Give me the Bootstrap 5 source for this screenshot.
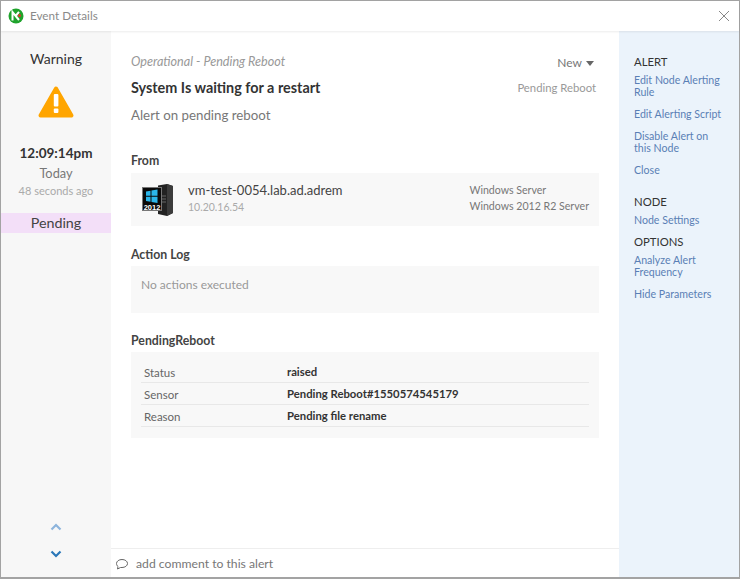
<!DOCTYPE html>
<html lang="en">
<head>
  <meta charset="UTF-8">
  <title>Event Details</title>
  <link href="https://cdn.jsdelivr.net/npm/bootstrap@5.3.0/dist/css/bootstrap.min.css" rel="stylesheet">
  <style>
    html, body { height: 100%; }
    body { font-family: Lato, sans-serif; font-size: 12px; color: #555; background: #fff; overflow: hidden; }
    .win { width: 740px; height: 579px; border: 1px solid #a3a3a3; border-bottom-width: 2px; }
    .titlebar { height: 30px; padding: 0 9px 0 7px; box-shadow: 0 1px 2px rgba(0,0,0,.08); position: relative; z-index: 1; color: #8a8a8a; font-size: 11.7px; }
    .title-text { margin-left: 6px; }
    .main-area { height: 546px; }
    .side-left { width: 110px; background: #f7f7f7; padding-top: 18px; }
    .center-col { width: 508px; }
    .side-right { width: 120px; background: #ebf3fb; padding: 24px 16px 0 14px; }
    .sev { font-size: 14px; color: #333; line-height: 20px; }
    .warn-ico { margin-top: 16px; display: block; }
    .clock { font-size: 13.5px; font-weight: 700; color: #333; margin-top: 24px; line-height: 20px; }
    .today { font-size: 12.8px; color: #777; line-height: 18px; margin-top: 1px; }
    .ago { font-size: 11px; color: #aaa; line-height: 18px; }
    .state-box { background: #f3dff8; font-size: 14.3px; color: #444; line-height: 20px; margin-top: 13px; }
    .arrows { margin-top: auto; padding-bottom: 19px; gap: 19px; }
    .scroll-pane { padding: 22px 20px 0; }
    .head-row { height: 21px; }
    .op-type { font-style: italic; color: #999; font-size: 12.6px; line-height: 18px; }
    .new-drop { color: #777; font-size: 12px; line-height: 18px; padding: 1px 5px 0 0; }
    .caret-dn { display: inline-block; border: 4.5px solid transparent; border-top: 5px solid #666; border-bottom: 0; margin-left: 4px; vertical-align: middle; }
    .title-row { margin-top: 4px; }
    .ev-title { font-size: 14.4px; font-weight: 700; color: #333; line-height: 20px; }
    .ev-sensor { font-size: 11.3px; color: #999; padding-right: 3px; }
    .ev-msg { font-size: 13.3px; color: #777; line-height: 18px; margin-top: 8px; }
    .sec-head { font-size: 12.3px; font-weight: 700; color: #444; line-height: 18px; }
    .from-head { margin-top: 28px; }
    .log-head { margin-top: 20px; }
    .param-head { margin-top: 19px; }
    .grey-box { background: #f8f8f8; }
    .host-box { height: 53px; margin-top: 3px; padding: 0 10px 0 11px; }
    .host-text { margin-left: 14px; padding-bottom: 4px; }
    .host-name { font-size: 13px; color: #444; line-height: 18px; }
    .host-ip { font-size: 10.5px; color: #aaa; line-height: 16px; }
    .host-side { padding-bottom: 4px; }
    .host-os { font-size: 10.6px; color: #777; line-height: 16px; text-align: left; }
    .log-box { height: 47px; margin-top: 2px; padding: 10px 10px 0; color: #999; font-size: 12px; line-height: 18px; }
    .param-box { height: 86px; margin-top: 2px; padding: 9px 10px 0; }
    .param-row { height: 22px; border-bottom: 1px solid #e8e8e8; font-size: 11.5px; }
    .param-key { width: 146px; padding-left: 3px; color: #666; padding-top: 2px; }
    .param-val { font-weight: 700; color: #333; font-size: 11.3px; padding-top: 1px; }
    .comment-bar { height: 29px; border-top: 1px solid #eee; padding: 2px 0 0 4px; font-size: 12.2px; color: #777; }
    .comment-text { margin-left: 7px; }
    .rt-head { font-size: 11.3px; color: #333; line-height: 14px; }
    .rt-link { display: block; font-size: 10.6px; color: #5a7fb5; line-height: 12px; text-decoration: none; margin-top: 10px; }
    .rt-head + .rt-link { margin-top: 5px; }
    .node-head { margin-top: 19px; }
    .opt-head { margin-top: 9px; }
    .side-right > * { margin-left: 1px; }
  </style>
</head>
<body>
  <div class="win d-flex flex-column">
    <div class="titlebar d-flex align-items-center">
      <svg width="16" height="16" viewBox="0 0 16 16">
        <circle cx="8" cy="8" r="7.5" fill="#1fa32c"/>
        <path d="M4.5 12.500V4l6.500 8M8 7.500 11 3.800" fill="none" stroke="#fff" stroke-width="2"/>
        <circle cx="11.500" cy="7.500" r="1.500" fill="#e0352b"/>
      </svg>
      <span class="title-text">Event Details</span>
      <svg class="ms-auto" width="12" height="12" viewBox="0 0 12 12"><path d="M1 1l10 10M11 1L1 11" stroke="#888" fill="none"/></svg>
    </div>
    <div class="main-area d-flex">
      <div class="side-left d-flex flex-column text-center">
        <div class="sev">Warning</div>
        <svg class="warn-ico mx-auto" width="38" height="34" viewBox="0 0 38 34">
          <path d="M19 3.500 34.500 30.500H3.500Z" fill="#ffa500" stroke="#ffa500" stroke-width="4" stroke-linejoin="round"/>
          <rect x="16.800" y="9" width="4.600" height="12.500" rx="1" fill="#fff"/>
          <rect x="16.800" y="23.500" width="4.600" height="4.600" rx="1" fill="#fff"/>
        </svg>
        <div class="clock">12:09:14pm</div>
        <div class="today">Today</div>
        <div class="ago">48 seconds ago</div>
        <div class="state-box">Pending</div>
        <div class="arrows d-flex flex-column align-items-center">
          <svg width="12" height="8" viewBox="0 0 12 8"><path d="M1.500 6.500 6 2l4.500 4.500" fill="none" stroke="#8db4dc" stroke-width="2.200"/></svg>
          <svg width="12" height="8" viewBox="0 0 12 8"><path d="M1.500 1.500 6 6l4.500-4.500" fill="none" stroke="#2a77b8" stroke-width="2.200"/></svg>
        </div>
      </div>
      <div class="center-col d-flex flex-column">
        <div class="scroll-pane flex-grow-1">
          <div class="d-flex justify-content-between head-row">
            <div class="op-type">Operational - Pending Reboot</div>
            <div class="new-drop">New<span class="caret-dn"></span></div>
          </div>
          <div class="d-flex justify-content-between align-items-center title-row">
            <div class="ev-title">System Is waiting for a restart</div>
            <div class="ev-sensor">Pending Reboot</div>
          </div>
          <div class="ev-msg">Alert on pending reboot</div>
          <div class="sec-head from-head">From</div>
          <div class="grey-box d-flex align-items-center host-box">
            <svg width="32" height="32" viewBox="0 0 32 32">
              <path d="M16 1.500 25 0l6 2v27l-6 3-9-2Z" fill="#222"/>
              <path d="M25 0l6 2v27l-6 3Z" fill="#3b3b3b"/>
              <path d="M20 12h4M20 15h4M20 18h4" stroke="#666"/>
              <rect x="0.500" y="3.500" width="19" height="23" fill="#0a0a0a" stroke="#777"/>
              <path d="M4 7.500l4.500-.8v5H4zM9.500 6.500l6-1v6.200h-6zM4 12.800h4.500v5L4 17zM9.500 12.800h6V19l-6-1z" fill="#2bb6ea"/>
              <text x="10" y="25.500" font-size="7.500" font-weight="700" fill="#fff" text-anchor="middle" font-family="Liberation Sans">2012</text>
            </svg>
            <div class="host-text">
              <div class="host-name">vm-test-0054.lab.ad.adrem</div>
              <div class="host-ip">10.20.16.54</div>
            </div>
            <div class="ms-auto host-side">
              <div class="host-os">Windows Server</div>
              <div class="host-os">Windows 2012 R2 Server</div>
            </div>
          </div>
          <div class="sec-head log-head">Action Log</div>
          <div class="grey-box log-box">No actions executed</div>
          <div class="sec-head param-head">PendingReboot</div>
          <div class="grey-box param-box">
            <div class="param-row d-flex align-items-center"><div class="param-key">Status</div><div class="param-val">raised</div></div>
            <div class="param-row d-flex align-items-center"><div class="param-key">Sensor</div><div class="param-val">Pending Reboot#1550574545179</div></div>
            <div class="param-row d-flex align-items-center"><div class="param-key">Reason</div><div class="param-val">Pending file rename</div></div>
          </div>
        </div>
        <div class="comment-bar d-flex align-items-center">
          <svg width="14" height="13" viewBox="0 0 14 13"><path d="M7 1.500c3 0 5.500 1.700 5.500 4S10 9.500 7 9.500H5.500L2.500 11l.5-2.500C2 7.800 1.500 6.700 1.500 5.500c0-2.300 2.500-4 5.500-4Z" fill="none" stroke="#666"/></svg>
          <span class="comment-text">add comment to this alert</span>
        </div>
      </div>
      <div class="side-right">
        <div class="rt-head">ALERT</div>
        <a class="rt-link" href="#">Edit Node Alerting Rule</a>
        <a class="rt-link" href="#">Edit Alerting Script</a>
        <a class="rt-link" href="#">Disable Alert on this Node</a>
        <a class="rt-link" href="#">Close</a>
        <div class="rt-head node-head">NODE</div>
        <a class="rt-link" href="#">Node Settings</a>
        <div class="rt-head opt-head">OPTIONS</div>
        <a class="rt-link" href="#">Analyze Alert Frequency</a>
        <a class="rt-link" href="#">Hide Parameters</a>
      </div>
    </div>
  </div>
  <script src="https://cdn.jsdelivr.net/npm/bootstrap@5.3.0/dist/js/bootstrap.bundle.min.js"></script>
</body>
</html>
